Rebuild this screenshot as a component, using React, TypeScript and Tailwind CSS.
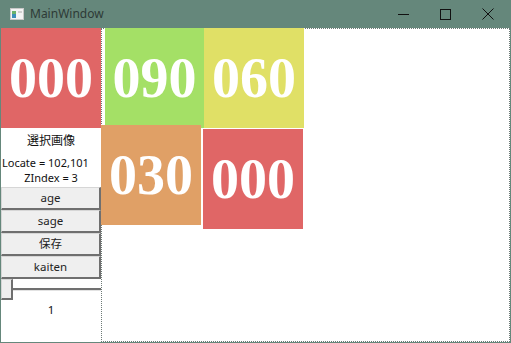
import React from "react";

const tiles = [
  { label: "090", cls: "left-[3px] top-[-1px] w-[99px] bg-[#a4e066]" },
  { label: "060", cls: "left-[102px] top-[-1px] w-[100px] bg-[#e0e066]" },
  { label: "030", cls: "left-[-1px] top-[96px] w-[100px] bg-[#e0a066]" },
  { label: "000", cls: "left-[101px] top-[100px] w-[100px] bg-[#e06666]" },
];

const numFont = "font-['Liberation_Serif',serif] font-bold text-white text-[56px] leading-none";

const Btn = ({ children }: { children: React.ReactNode }) => (
  <button className="h-[23px] w-full bg-[#efefef] border-t border-l border-[#d6d6d6] border-b-2 border-r-2 border-b-[#6f6f6f] border-r-[#6f6f6f] text-[11.5px] text-[#222] leading-none">
    {children}
  </button>
);

const App = () => {
  return (
    <div className="w-[511px] h-[343px] bg-[#65877b] flex flex-col font-['Noto_Sans','Noto_Sans_CJK_JP',sans-serif]">
      <div className="h-[28px] flex items-center shrink-0">
        <svg width="14" height="12" viewBox="0 0 14 12" className="ml-[10px]">
          <rect x="0.5" y="0.5" width="13" height="11" fill="#f4f4f4" stroke="#c8c8c8" />
          <rect x="2" y="3" width="4" height="7" fill="#3d8fb8" />
          <rect x="2" y="3" width="4" height="3" fill="#6bb36a" />
          <rect x="8" y="3" width="4" height="2" fill="#d0d0d0" />
        </svg>
        <span className="ml-[6px] text-[12px] text-[#2e3a36]">MainWindow</span>
        <div className="ml-auto flex items-center">
          <div className="w-[46px] h-[28px] flex items-center justify-center">
            <div className="w-[11px] h-px bg-[#111]" />
          </div>
          <div className="w-[39px] h-[28px] flex items-center justify-center">
            <div className="w-[11px] h-[11px] border border-[#111]" />
          </div>
          <div className="w-[46px] h-[28px] flex items-center justify-center">
            <svg width="12" height="12" viewBox="0 0 12 12">
              <path d="M0.5 0.5 L11.5 11.5 M11.5 0.5 L0.5 11.5" stroke="#111" strokeWidth="1" />
            </svg>
          </div>
        </div>
      </div>
      <div className="flex flex-1 mx-px mb-px bg-white min-h-0">
        <div className="w-[100px] flex flex-col shrink-0">
          <div className={`h-[100px] bg-[#e06666] flex items-center justify-center ${numFont}`}>000</div>
          <div className="pt-[5px] text-center text-[12px] leading-[16px] text-[#111]">選択画像</div>
          <div className="mt-[7px] text-[11px] leading-[14px] text-[#111] whitespace-nowrap pl-px">Locate = 102,101</div>
          <div className="mt-px text-center text-[11px] leading-[14px] text-[#111]">ZIndex = 3</div>
          <div className="mt-[2px] flex flex-col">
            <Btn>age</Btn>
            <Btn>sage</Btn>
            <Btn>保存</Btn>
            <Btn>kaiten</Btn>
          </div>
          <div className="h-[21px] relative flex items-center">
            <div className="absolute left-0 right-0 top-[9px] h-[2px] bg-[#707070]" />
            <div className="absolute left-0 right-0 top-[11px] h-px bg-[#e2e2e2]" />
            <div className="relative w-[12px] h-[21px] bg-[#efefef] border-t border-l border-[#d6d6d6] border-b-2 border-r-2 border-b-[#6f6f6f] border-r-[#6f6f6f]" />
          </div>
          <div className="mt-[2px] text-center text-[11.5px] leading-[16px] text-[#111]">1</div>
        </div>
        <div className="flex-1 relative border border-dotted border-[#6d7a76]">
          {tiles.map((t) => (
            <div
              key={t.label + t.cls}
              className={`absolute h-[100px] flex items-center justify-center ${t.cls} ${numFont}`}
            >
              {t.label}
            </div>
          ))}
        </div>
      </div>
    </div>
  );
};

export default App;
